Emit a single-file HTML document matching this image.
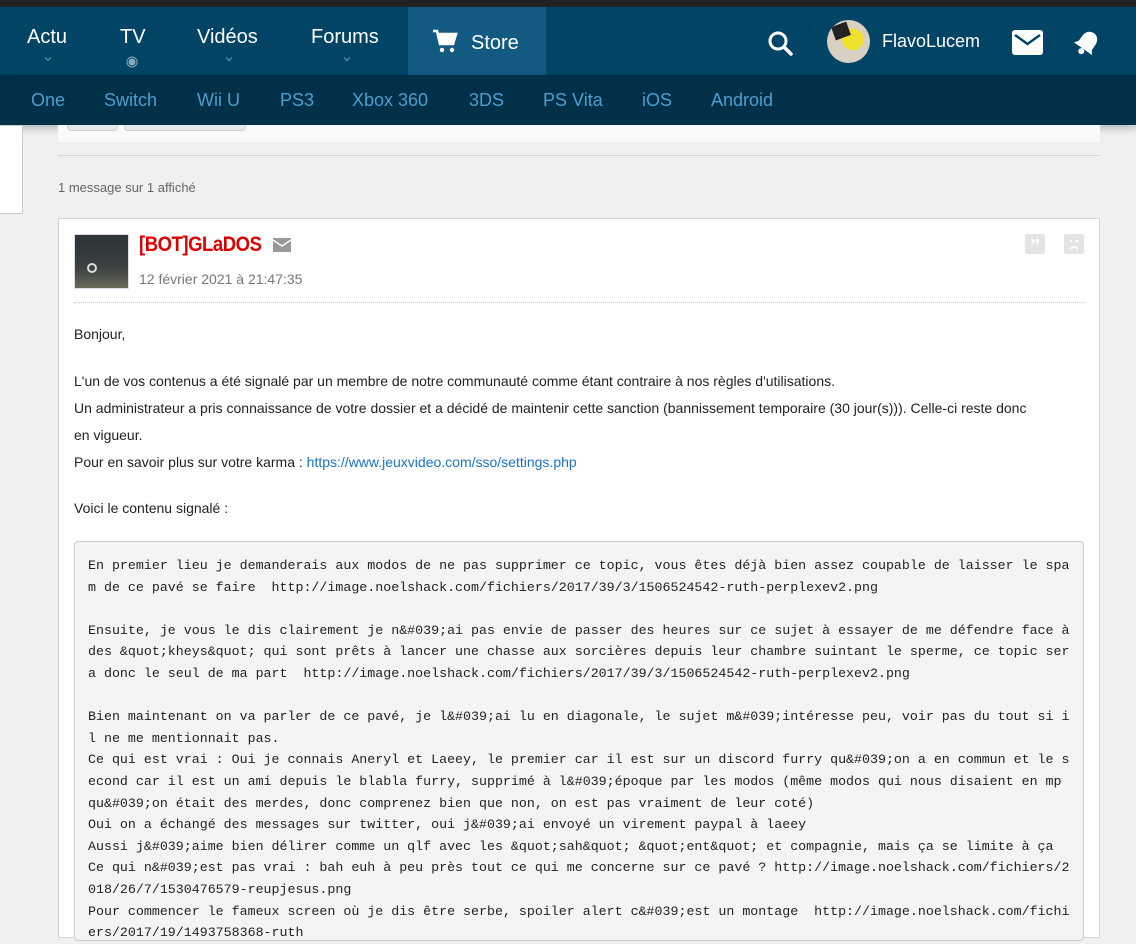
<!DOCTYPE html>
<html><head><meta charset="utf-8"><style>
*{margin:0;padding:0;box-sizing:border-box}
body{width:1136px;height:926px;overflow:hidden;background:#f0f0f0;font-family:"Liberation Sans",Arial,sans-serif;position:relative}
.top{position:absolute;left:0;top:0;width:1136px;height:7px;background:#222}
.hdr{position:absolute;left:0;top:7px;width:1136px;height:68px;background:#024466}
.sub{position:absolute;left:0;top:75px;width:1136px;height:50px;background:#013048;box-shadow:0 3px 8px rgba(0,0,0,.25)}
.n{position:absolute;color:#fff;font-size:20px;top:26px}
.car{position:absolute;top:55px;width:8px;height:8px}
.s{position:absolute;top:90px;color:#4b9fd0;font-size:18px}
.store{position:absolute;left:408px;top:7px;width:138px;height:68px;background:#135a83}
.left{position:absolute;left:0;top:125px;width:23px;height:89px;background:#fff;border:1px solid #ccc;border-left:0}
.post{position:absolute;left:58px;top:218px;width:1042px;height:720px;background:#fff;border:1px solid #d6d6d6}
.body{position:absolute;left:74px;font-size:14px;color:#222}
pre{position:absolute;left:74px;top:541px;width:1010px;height:400px;background:#f4f4f4;border:1px solid #ccc;border-radius:4px;padding:13px 0 0 13px;font-family:"Liberation Mono",monospace;font-size:13.3px;line-height:21.6px;color:#222}
</style></head><body>
<div class="top"></div>
<div class="hdr"></div>
<div class="store"></div>
<div class="n" style="left:27px">Actu</div>
<div class="n" style="left:120px">TV</div>
<div class="n" style="left:197px">Vidéos</div>
<div class="n" style="left:311px">Forums</div>
<svg class="car" style="left:44px" viewBox="0 0 8 8"><path d="M1 2.5l3 3 3-3" stroke="#6d9bb8" fill="none"/></svg>
<svg style="position:absolute;left:126px;top:56px" width="12" height="12"><circle cx="6" cy="6" r="5" fill="none" stroke="#8aa9bd" stroke-width="1"/><circle cx="6" cy="6" r="3.5" fill="#8aa9bd"/></svg>
<svg class="car" style="left:225px" viewBox="0 0 8 8"><path d="M1 2.5l3 3 3-3" stroke="#6d9bb8" fill="none"/></svg>
<svg class="car" style="left:343px" viewBox="0 0 8 8"><path d="M1 2.5l3 3 3-3" stroke="#6d9bb8" fill="none"/></svg>
<svg style="position:absolute;left:432px;top:28px" width="26" height="26" viewBox="0 0 26 26"><path d="M1 3h4l3 13h13l3-10H7" fill="none" stroke="#fff" stroke-width="2.6"/><path d="M7 6h17l-3 10H9z" fill="#fff"/><circle cx="10" cy="22" r="2.2" fill="#fff"/><circle cx="20" cy="22" r="2.2" fill="#fff"/></svg>
<div class="n" style="left:471px;top:32px">Store</div>
<svg style="position:absolute;left:767px;top:30px" width="28" height="26"><circle cx="11" cy="11" r="8" fill="none" stroke="#fff" stroke-width="3"/><path d="M17 17l7 7" stroke="#fff" stroke-width="3.5" stroke-linecap="round"/></svg>
<div style="position:absolute;left:809px;top:26px;width:1px;height:30px;background:#03395a"></div>
<div style="position:absolute;left:827px;top:20px;width:43px;height:43px;border-radius:50%;background:radial-gradient(circle at 60% 45%,#f0e030 0 30%,#d8d0c0 32%);overflow:hidden"><div style="position:absolute;left:6px;top:4px;width:16px;height:14px;background:#222;transform:rotate(-20deg)"></div></div>
<div class="n" style="left:882px;top:31px;font-size:18px">FlavoLucem</div>
<svg style="position:absolute;left:1012px;top:30px" width="31" height="25"><rect x="0" y="0" width="31" height="25" rx="3" fill="#fff"/><path d="M3 5l12.5 9 12.5-9" stroke="#024466" stroke-width="2.5" fill="none"/></svg>
<svg style="position:absolute;left:1073px;top:28px" width="28" height="30" viewBox="0 0 28 30"><g transform="rotate(35 14 15)"><path d="M14 3c-5 0-8 4-8 9v6l-3 4h22l-3-4v-6c0-5-3-9-8-9z" fill="#fff"/><circle cx="14" cy="25" r="3" fill="#fff"/></g></svg>
<div class="sub"></div>
<div class="s" style="left:31px">One</div><div class="s" style="left:104px">Switch</div><div class="s" style="left:197px">Wii U</div><div class="s" style="left:280px">PS3</div><div class="s" style="left:352px">Xbox 360</div><div class="s" style="left:469px">3DS</div><div class="s" style="left:543px">PS Vita</div><div class="s" style="left:642px">iOS</div><div class="s" style="left:711px">Android</div>
<div class="left"></div>
<div style="position:absolute;left:58px;top:125px;width:1042px;height:17px;background:#fafafa"></div>
<div style="position:absolute;left:67px;top:125px;width:51px;height:6px;background:#e8e8e8;border:1px solid #ccc;border-top:0;border-radius:0 0 4px 4px"></div>
<div style="position:absolute;left:124px;top:125px;width:122px;height:6px;background:#e8e8e8;border:1px solid #ccc;border-top:0;border-radius:0 0 4px 4px"></div>
<div style="position:absolute;left:58px;top:155px;width:1042px;height:1px;background:#d6d6d6"></div>
<div style="position:absolute;left:58px;top:180px;font-size:13px;color:#666">1 message sur 1 affiché</div>
<div class="post"></div>
<div style="position:absolute;left:74px;top:234px;width:55px;height:55px;border:1px solid #dcdcec;background:linear-gradient(#2c3438,#3a4040 60%,#6a6a58)"><div style="position:absolute;left:12px;top:28px;width:10px;height:10px;border-radius:50%;border:2px solid #ddd"></div></div>
<div style="position:absolute;left:139px;top:233px;font-size:21px;font-weight:bold;color:#d00;letter-spacing:-0.5px;transform:scaleX(.88);transform-origin:left">[BOT]GLaDOS</div>
<svg style="position:absolute;left:273px;top:238px" width="18" height="14"><rect width="18" height="14" fill="#999"/><path d="M0 2l9 6 9-6" stroke="#fff" stroke-width="1.5" fill="none"/></svg>
<div style="position:absolute;left:139px;top:271px;font-size:14px;color:#777">12 février 2021 à 21:47:35</div>
<div style="position:absolute;left:1025px;top:234px;width:20px;height:20px;background:#e4e4e4;border-radius:2px;color:#fff;font:bold 20px/24px 'Liberation Serif';text-align:center">”</div>
<div style="position:absolute;left:1064px;top:234px;width:20px;height:20px;background:#e4e4e4;border-radius:2px"><svg width="20" height="20"><circle cx="7" cy="7" r="1.3" fill="#fff"/><circle cx="13" cy="7" r="1.3" fill="#fff"/><path d="M6 15q4-4 8 0" stroke="#fff" stroke-width="1.5" fill="none"/></svg></div>
<div style="position:absolute;left:74px;top:302px;width:1010px;border-top:1px dotted #ccc"></div>
<div class="body" style="top:326px">Bonjour,</div>
<div class="body" style="top:368px;line-height:27px">L'un de vos contenus a été signalé par un membre de notre communauté comme étant contraire à nos règles d'utilisations.<br>Un administrateur a pris connaissance de votre dossier et a décidé de maintenir cette sanction (bannissement temporaire (30 jour(s))). Celle-ci reste donc<br>en vigueur.<br>Pour en savoir plus sur votre karma : <span style="color:#1a73c8">https://www.jeuxvideo.com/sso/settings.php</span></div>
<div class="body" style="top:500px">Voici le contenu signalé :</div>
<pre>En premier lieu je demanderais aux modos de ne pas supprimer ce topic, vous êtes déjà bien assez coupable de laisser le spa
m de ce pavé se faire  http://image.noelshack.com/fichiers/2017/39/3/1506524542-ruth-perplexev2.png

Ensuite, je vous le dis clairement je n&amp;#039;ai pas envie de passer des heures sur ce sujet à essayer de me défendre face à
des &amp;quot;kheys&amp;quot; qui sont prêts à lancer une chasse aux sorcières depuis leur chambre suintant le sperme, ce topic ser
a donc le seul de ma part  http://image.noelshack.com/fichiers/2017/39/3/1506524542-ruth-perplexev2.png

Bien maintenant on va parler de ce pavé, je l&amp;#039;ai lu en diagonale, le sujet m&amp;#039;intéresse peu, voir pas du tout si i
l ne me mentionnait pas.
Ce qui est vrai : Oui je connais Aneryl et Laeey, le premier car il est sur un discord furry qu&amp;#039;on a en commun et le s
econd car il est un ami depuis le blabla furry, supprimé à l&amp;#039;époque par les modos (même modos qui nous disaient en mp
qu&amp;#039;on était des merdes, donc comprenez bien que non, on est pas vraiment de leur coté)
Oui on a échangé des messages sur twitter, oui j&amp;#039;ai envoyé un virement paypal à laeey
Aussi j&amp;#039;aime bien délirer comme un qlf avec les &amp;quot;sah&amp;quot; &amp;quot;ent&amp;quot; et compagnie, mais ça se limite à ça
Ce qui n&amp;#039;est pas vrai : bah euh à peu près tout ce qui me concerne sur ce pavé ? http://image.noelshack.com/fichiers/2
018/26/7/1530476579-reupjesus.png
Pour commencer le fameux screen où je dis être serbe, spoiler alert c&amp;#039;est un montage  http://image.noelshack.com/fichi
ers/2017/19/1493758368-ruth</pre>
</body></html>
